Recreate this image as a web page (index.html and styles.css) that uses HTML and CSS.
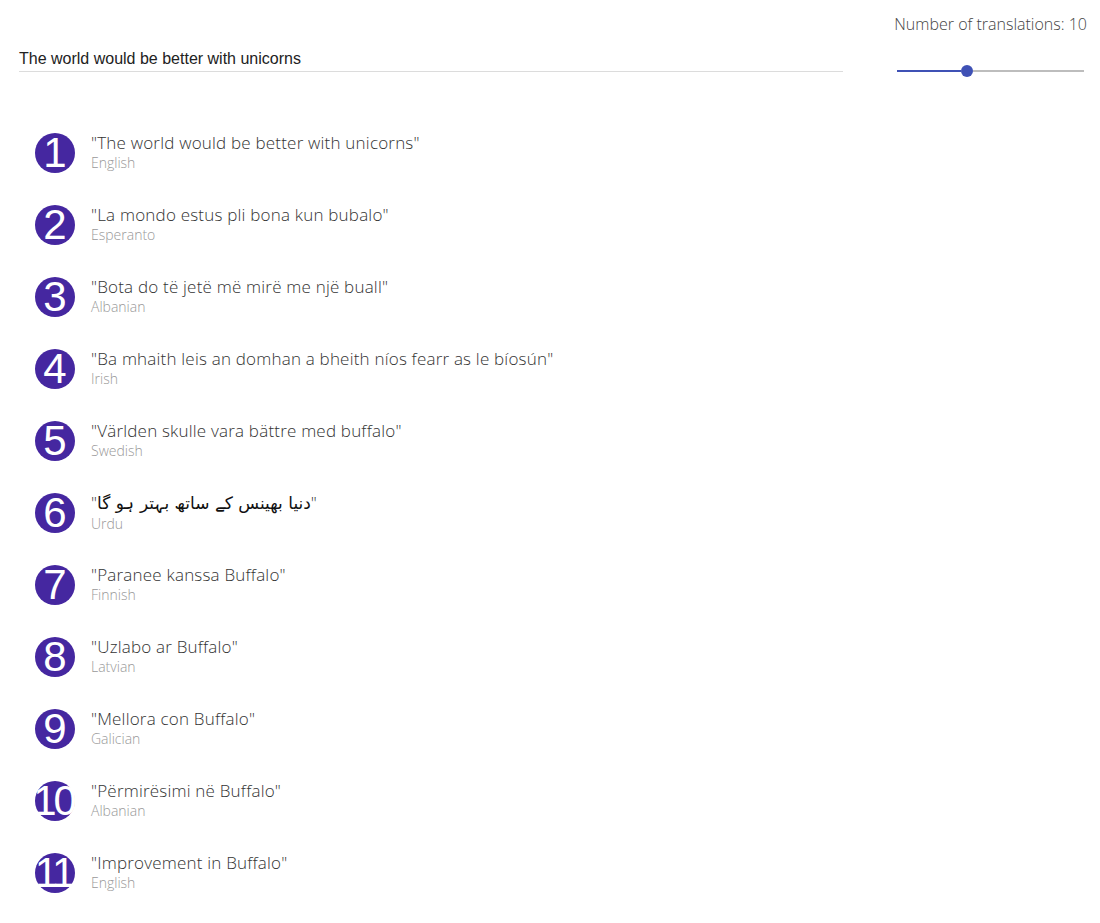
FILE: index.html
```html
<!DOCTYPE html>
<html>
<head>
<meta charset="utf-8">
<link rel="stylesheet" href="styles.css">
</head>
<body>
<div class="header">
  <div class="field">
    <div class="field-input">The world would be better with unicorns</div>
  </div>
  <div class="slider-box">
    <div class="slider-label">Number of translations: 10</div>
    <div class="slider">
      <div class="track-on"></div>
      <div class="thumb"></div>
      <div class="track-off"></div>
    </div>
  </div>
</div>
<ul class="list">
  <li class="item"><span class="num">1</span><div class="txt"><div class="tr">"The world would be better with unicorns"</div><div class="lang">English</div></div></li>
  <li class="item"><span class="num">2</span><div class="txt"><div class="tr">"La mondo estus pli bona kun bubalo"</div><div class="lang">Esperanto</div></div></li>
  <li class="item"><span class="num">3</span><div class="txt"><div class="tr">"Bota do të jetë më mirë me një buall"</div><div class="lang">Albanian</div></div></li>
  <li class="item"><span class="num">4</span><div class="txt"><div class="tr">"Ba mhaith leis an domhan a bheith níos fearr as le bíosún"</div><div class="lang">Irish</div></div></li>
  <li class="item"><span class="num">5</span><div class="txt"><div class="tr">"Världen skulle vara bättre med buffalo"</div><div class="lang">Swedish</div></div></li>
  <li class="item"><span class="num">6</span><div class="txt"><div class="tr">"<span class="urdu">دنیا بھینس کے ساتھ بہتر ہو گا</span>"</div><div class="lang">Urdu</div></div></li>
  <li class="item"><span class="num">7</span><div class="txt"><div class="tr">"Paranee kanssa Buffalo"</div><div class="lang">Finnish</div></div></li>
  <li class="item"><span class="num">8</span><div class="txt"><div class="tr">"Uzlabo ar Buffalo"</div><div class="lang">Latvian</div></div></li>
  <li class="item"><span class="num">9</span><div class="txt"><div class="tr">"Mellora con Buffalo"</div><div class="lang">Galician</div></div></li>
  <li class="item"><span class="num">10</span><div class="txt"><div class="tr">"Përmirësimi në Buffalo"</div><div class="lang">Albanian</div></div></li>
  <li class="item"><span class="num">11</span><div class="txt"><div class="tr">"Improvement in Buffalo"</div><div class="lang">English</div></div></li>
</ul>
</body>
</html>
```
FILE: styles.css
```css
html, body {
  margin: 0;
  padding: 0;
  background: #fff;
}
body {
  font-family: "Open Sans", "DejaVu Sans", sans-serif;
}
.header {
  display: flex;
  justify-content: space-between;
  padding: 0 13px 0 19px;
}
.field {
  width: 824px;
  padding-top: 47px;
}
.field-input {
  font-family: "Liberation Sans", Arial, sans-serif;
  font-size: 16px;
  color: #222;
  height: 24px;
  line-height: 24px;
  border-bottom: 1px solid #dcdcdc;
}
.slider-box {
  width: 200px;
  padding-top: 13px;
  display: flex;
  flex-direction: column;
  align-items: flex-end;
}
.slider-label {
  font-size: 16px;
  font-weight: 300;
  color: #444;
  line-height: 22px;
}
.slider {
  margin-top: 30px;
  width: 187px;
  height: 12px;
  display: flex;
  align-items: center;
  margin-right: 3px;
}
.track-on {
  width: 64px;
  height: 2px;
  background: #3f51b5;
}
.thumb {
  width: 12px;
  height: 12px;
  border-radius: 50%;
  background: #3f51b5;
  flex: none;
}
.track-off {
  flex: 1;
  height: 2px;
  background: #bdbdbd;
}
.list {
  list-style: none;
  margin: 56px 0 0 0;
  padding: 0 0 0 35px;
}
.item {
  display: flex;
  align-items: center;
  height: 40px;
  margin-bottom: 32px;
}
.num {
  flex: none;
  width: 40px;
  height: 40px;
  border-radius: 50%;
  background: #4527a0;
  color: #fff;
  font-family: "Liberation Sans", Arial, sans-serif;
  font-size: 42px;
  line-height: 40px;
  text-align: center;
  display: flex;
  justify-content: center;
  letter-spacing: -3px;
  text-indent: -3px;
  white-space: nowrap;
}
.txt {
  margin-left: 16px;
  margin-bottom: 2px;
  display: flex;
  flex-direction: column;
}
.tr {
  font-size: 17px;
  font-weight: 300;
  color: #333;
  line-height: 21px;
  letter-spacing: 0.2px;
}
.urdu {
  font-family: "DejaVu Sans", sans-serif;
  font-weight: 400;
  font-size: 17px;
  letter-spacing: 0;
  color: #111;
}
.lang {
  font-size: 14px;
  font-weight: 300;
  color: #999;
  line-height: 19px;
}
```
